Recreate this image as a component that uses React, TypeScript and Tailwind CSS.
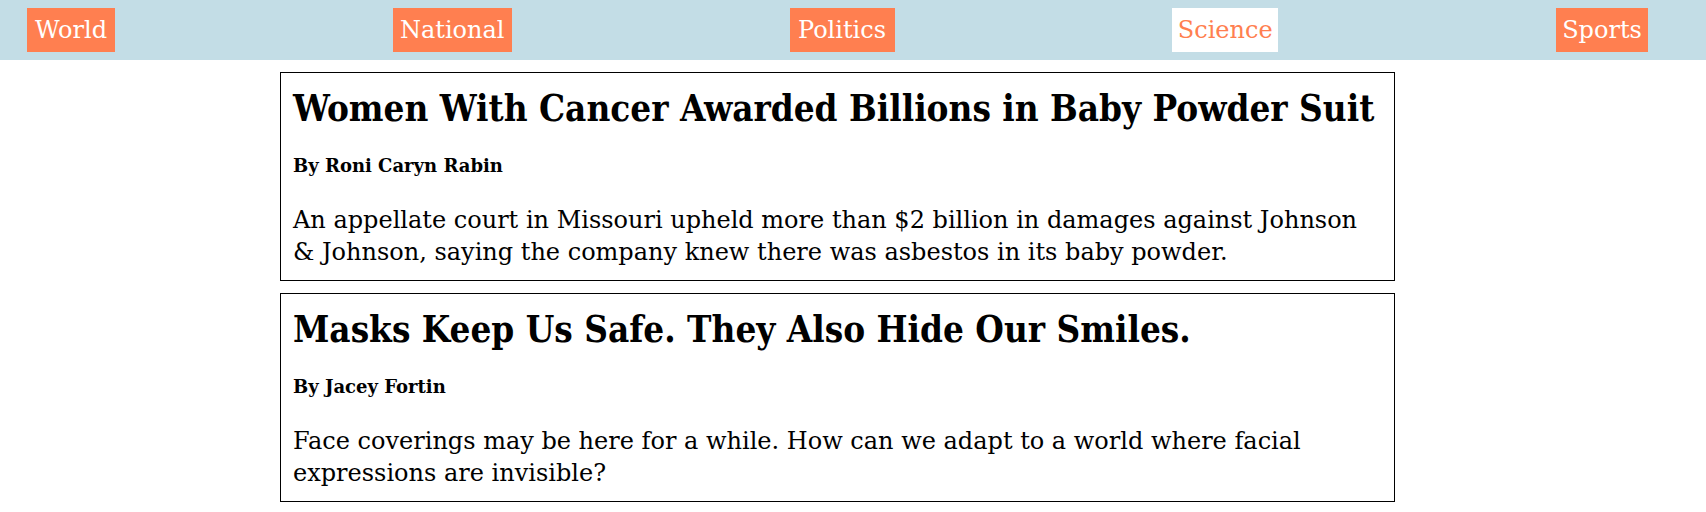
import React from 'react';

const sections = [
  { name: 'World', width: 'w-[88px]' },
  { name: 'National', width: 'w-[119px]' },
  { name: 'Politics', width: 'w-[105px]' },
  { name: 'Science', width: 'w-[106px]' },
  { name: 'Sports', width: 'w-[92px]' },
];
const active = 'Science';

const stories = [
  {
    title: 'Women With Cancer Awarded Billions in Baby Powder Suit',
    byline: 'By Roni Caryn Rabin',
    abstract:
      'An appellate court in Missouri upheld more than $2 billion in damages against Johnson & Johnson, saying the company knew there was asbestos in its baby powder.',
  },
  {
    title: 'Masks Keep Us Safe. They Also Hide Our Smiles.',
    byline: 'By Jacey Fortin',
    abstract:
      'Face coverings may be here for a while. How can we adapt to a world where facial expressions are invisible?',
  },
];

export default function App() {
  return (
    <div className="min-h-screen bg-white text-black font-['DejaVu_Serif',serif]">
      <nav className="h-[60px] bg-[#c3dde6] flex items-center justify-between pl-[27px] pr-[58px]">
        {sections.map((s) => (
          <a
            key={s.name}
            href="#"
            className={`${s.width} h-[44px] flex items-center justify-center text-[24px] whitespace-nowrap ${
              s.name === active ? 'bg-white text-[#ff7f50]' : 'bg-[#ff7f50] text-white'
            }`}
          >
            {s.name}
          </a>
        ))}
      </nav>

      <main className="ml-[280px] w-[1115px] pt-3 flex flex-col gap-3">
        {stories.map((story) => (
          <article key={story.title} className="border border-black px-3 pt-[14px] pb-[12px]">
            <h2 className="text-[36.5px] leading-[44px] font-bold font-['DejaVu_Serif_Condensed','DejaVu_Serif',serif]">
              {story.title}
            </h2>
            <p className="mt-[23px] text-[18px] leading-[24px] font-bold">{story.byline}</p>
            <p className="mt-[26px] max-w-[1080px] text-[24px] leading-[32px]">{story.abstract}</p>
          </article>
        ))}
      </main>
    </div>
  );
}
